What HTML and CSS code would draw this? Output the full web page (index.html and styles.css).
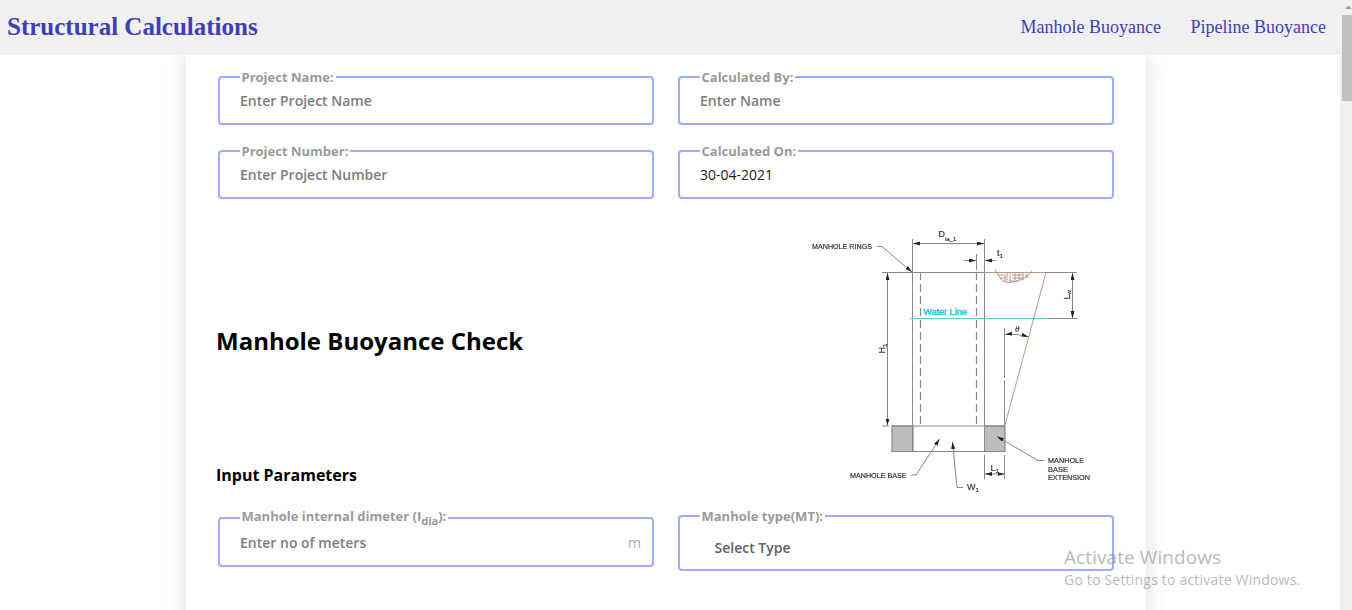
FILE: index.html
```html
<!DOCTYPE html>
<html lang="en">
<head>
<meta charset="utf-8">
<title>Structural Calculations</title>
<link rel="stylesheet" href="styles.css">
</head>
<body>
<div class="page">
  <header class="navbar">
    <h1 class="brand">Structural Calculations</h1>
    <nav class="links"><a>Manhole Buoyance</a><a>Pipeline Buoyance</a></nav>
  </header>
  <main class="content">
    <form class="card">
      <div class="row">
        <fieldset class="field"><legend>Project Name:</legend><div class="value hint">Enter Project Name</div></fieldset>
        <fieldset class="field"><legend>Calculated By:</legend><div class="value hint">Enter Name</div></fieldset>
        <fieldset class="field"><legend>Project Number:</legend><div class="value hint">Enter Project Number</div></fieldset>
        <fieldset class="field"><legend>Calculated On:</legend><div class="value date">30-04-2021</div></fieldset>
      </div>
      <section class="intro">
        <div class="headings">
          <h2 class="title">Manhole Buoyance Check</h2>
          <h3 class="subtitle">Input Parameters</h3>
        </div>
        <svg class="diagram" width="310" height="280" viewBox="800 220 310 280">
          <defs>
            <marker id="arrow" markerUnits="userSpaceOnUse" markerWidth="8" markerHeight="5" refX="7" refY="2" orient="auto-start-reverse"><path d="M0 0L7 2L0 4Z" fill="#222"/></marker>
          </defs>
          <g class="blocks"><rect x="892" y="426" width="21" height="25.500"/><rect x="984.500" y="426" width="20.500" height="25.500"/></g>
          <g class="lines">
            <path d="M912.500 239V451.500M984.500 239V451.500M882 272.500H984M892 426H1005M892 451.500H1005M1004.500 328V378M1004.500 380V425M976.500 254V270M1046 272.500H1077M1048 318.500H1077M984.500 455V479M1004.500 455V479M882 426H889"/>
            <path class="dash" d="M920.500 272V426M976.500 272V426"/>
          </g>
          <g class="arrows">
            <path marker-start="url(#arrow)" marker-end="url(#arrow)" d="M913 243.500H984"/>
            <path marker-start="url(#arrow)" marker-end="url(#arrow)" d="M887.500 273V425.500"/>
            <path marker-start="url(#arrow)" marker-end="url(#arrow)" d="M1072.500 273V318"/>
            <path marker-start="url(#arrow)" marker-end="url(#arrow)" d="M985 474H1004.500"/>
            <path marker-start="url(#arrow)" marker-end="url(#arrow)" d="M1005 334.500Q1017 333 1028.500 337"/>
            <path marker-end="url(#arrow)" d="M963.500 260.500H976"/>
            <path marker-end="url(#arrow)" d="M996 260.500H985"/>
            <path marker-end="url(#arrow)" d="M877 246.500H882L912 272"/>
            <path marker-end="url(#arrow)" d="M911 475H916L939.500 439"/>
            <path marker-end="url(#arrow)" d="M963 487.500H957L952.500 442"/>
            <path marker-end="url(#arrow)" d="M1044 460.500H1038L997 436.500"/>
          </g>
          <path class="water" d="M910 318.500H1048"/>
          <g class="soil">
            <path d="M984 272.500H1046L1005 425"/>
            <path d="M995 269C999 278 1003 283 1009 282.500C1018 282 1027 278 1032 271"/>
            <path d="M998 275H1005V282M1000 278H1005M1007 273V281M1010 273V281M1012 275H1023M1012 278H1023M1015 273V280M1019 273V280M1023 273V280M1025 275H1029M1025 277H1028M1009 281H1018"/>
          </g>
          <g class="labels">
            <text x="812" y="249" textLength="60" lengthAdjust="spacingAndGlyphs">MANHOLE RINGS</text>
            <text x="850" y="477.500" textLength="56.500" lengthAdjust="spacingAndGlyphs">MANHOLE BASE</text>
            <text x="1048" y="463" textLength="36" lengthAdjust="spacingAndGlyphs">MANHOLE</text>
            <text x="1048" y="471.500" textLength="20" lengthAdjust="spacingAndGlyphs">BASE</text>
            <text x="1048" y="480" textLength="42" lengthAdjust="spacingAndGlyphs">EXTENSION</text>
            <text class="symbol" x="938.500" y="237">D<tspan class="sub" dy="3.500">ia_1</tspan></text>
            <text class="symbol" x="997" y="256">t<tspan class="sub" dy="2">1</tspan></text>
            <text class="symbol" x="990.500" y="471">L<tspan class="sub" dy="2">1</tspan></text>
            <text class="symbol" x="967" y="490">W<tspan class="sub" dy="2">1</tspan></text>
            <text class="symbol" transform="translate(884.500 353.500) rotate(-90)">H<tspan class="sub" dy="2">1</tspan></text>
            <text class="symbol" transform="translate(1069.500 299.500) rotate(-90)">L<tspan class="sub" dy="1">w</tspan></text>
            <text class="theta" x="1015" y="332">θ</text>
            <text class="water-label" x="923.500" y="315" textLength="43.500" lengthAdjust="spacingAndGlyphs">Water Line</text>
          </g>
        </svg>
      </section>
      <div class="row params">
        <fieldset class="field measured"><legend>Manhole internal dimeter (I<sub>dia</sub>):</legend><div class="value hint"><span>Enter no of meters</span><span class="unit">m</span></div></fieldset>
        <fieldset class="field choice"><legend>Manhole type(MT):</legend><div class="value">Select Type</div></fieldset>
      </div>
    </form>
  </main>
</div>
<div class="scrollbar"><svg class="up" width="12" height="15" viewBox="0 0 12 15"><path d="M5 9L8.500 5.500L12 9Z" fill="#a3a3a3"/></svg><div class="thumb"></div></div>
<aside class="watermark"><div class="wm-title">Activate Windows</div><div class="wm-text">Go to Settings to activate Windows.</div></aside>
</body>
</html>
```
FILE: styles.css
```css
* { box-sizing: border-box; }
body { margin: 0; height: 610px; overflow: hidden; display: flex; background: #fff; font-family: "Open Sans", sans-serif; }
.page { width: 1340px; height: 610px; overflow: hidden; display: flex; flex-direction: column; }
.navbar { position: relative; z-index: 1; flex: none; height: 55px; padding: 0 14px 2px 7px; display: flex; align-items: center; justify-content: space-between; background: #f0f0f0; color: #3f3fb5; font-family: "Liberation Serif", serif; }
.brand { margin: 0; font-size: 25px; line-height: 30px; font-weight: 700; }
.links { display: flex; gap: 29.5px; padding-top: 1px; font-size: 18px; }
.content { flex: 1; padding-left: 186px; }
.card { width: 960px; height: 620px; padding: 13px 32px; background: #fff; box-shadow: 0 0 20px rgba(0, 0, 0, .15); }
.row { display: grid; grid-template-columns: 436px 436px; column-gap: 24px; row-gap: 17px; align-items: start; }
.field { min-width: 0; height: 57px; margin: 0; padding: 0 20px; border: 2px solid #9dadfb; border-radius: 4px; }
legend { height: 18px; padding: 0 2px 0 1.5px; font-size: 13px; line-height: 18px; font-weight: 700; color: #999; white-space: nowrap; }
legend sub { font-size: 11px; line-height: 0; }
.value { display: flex; justify-content: space-between; padding-top: 5px; font-size: 14px; line-height: 20px; font-weight: 600; color: #333; }
.date { font-weight: 500; color: #222; }
.hint { color: #7c7c7c; }
.unit { color: #aaa; margin-right: -9px; font-weight: 400; }
.intro { display: grid; grid-template-columns: 584px 310px; margin: 21px 0 7px -2px; }
.headings { padding-top: 104px; }
.title { margin: 0; font-size: 24px; line-height: 34px; font-weight: 700; color: #000; }
.subtitle { margin: 106px 0 0; font-size: 16px; line-height: 22px; font-weight: 700; color: #000; }
.diagram { display: block; filter: blur(.4px); }
.params { height: 64px; }
.measured { height: 58px; margin-top: 2px; }
.measured legend { line-height: 15px; }
.measured .value { padding-top: 6px; }
.choice { height: 64px; }
.choice .value { padding: 13px 0 0 14.5px; color: #606060; }
.lines { fill: none; stroke: #888; stroke-width: 1; }
.dash { stroke-dasharray: 8 4; stroke: #888; stroke-width: 1.2; }
.arrows { fill: none; stroke: #777; stroke-width: .9; }
.blocks { fill: #bdbdbd; stroke: #777; }
.water { stroke: #62cbdc; stroke-width: 1; }
.soil { fill: none; stroke: #b08b7d; stroke-width: .9; }
.labels { font-family: "Liberation Sans", sans-serif; font-size: 7.500px; fill: #333; stroke: #333; stroke-width: .2; }
.symbol { font-size: 9px; }
.sub { font-size: 6px; }
.theta { font: italic 9px "Liberation Serif", serif; }
.water-label { font-size: 8.500px; fill: #26c0dc; stroke: #26c0dc; stroke-width: .4; }
.scrollbar { width: 12px; height: 610px; padding-left: 2px; background: #f0f0f0; }
.up { display: block; margin-left: -2px; }
.thumb { height: 86px; background: #c1c1c1; }
.watermark { position: absolute; left: 1064px; top: 545px; color: rgba(130, 130, 130, .58); white-space: nowrap; }
.wm-title { font-size: 19px; line-height: 25px; letter-spacing: .08px; }
.wm-text { font-size: 14px; line-height: 20px; letter-spacing: .2px; }
```
